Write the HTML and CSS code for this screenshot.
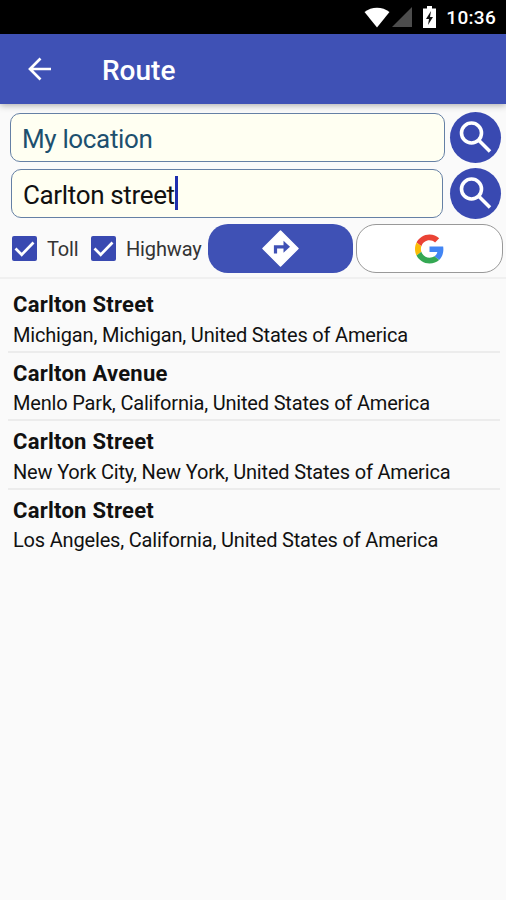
FILE: index.html
```html
<!DOCTYPE html>
<html lang="en">
<head>
  <meta charset="UTF-8" />
  <meta name="viewport" content="width=device-width, initial-scale=1" />
  <title>Route</title>
  <link rel="stylesheet" href="styles.css">
</head>
<body>
  <div class="status-bar">
    <svg class="wifi" viewBox="0 0 26 21"><path d="M0.5 5C7.5-.8 18.500-.8 25.500 5L13 20.500z" fill="#fff"/></svg>
    <svg class="signal" viewBox="0 0 20 20"><path d="M0 20L20 0V20z" fill="#4d4d4d"/></svg>
    <svg class="battery" viewBox="0 0 13 22">
      <path d="M4 0h5v2.500h4V22H0V2.500h4z" fill="#fff"/>
      <path d="M8 5L3 13h3l-1 6 5-8H7z" fill="#111"/>
    </svg>
    <span class="clock">10:36</span>
  </div>

  <header class="app-bar">
    <svg class="back" viewBox="0 0 24 24"><path d="M12.500 1.500L2 12l10.500 10.500M2 12h21" fill="none" stroke="#fff" stroke-width="2.700"/></svg>
    <h1>Route</h1>
  </header>

  <main>
    <div class="search-row">
      <div class="field from">My location</div>
      <button type="button" class="search-btn" aria-label="Search start">
        <svg viewBox="0 0 51 51"><circle cx="21.500" cy="21" r="10" /><path d="M28.500 28L40 39.500"/></svg>
      </button>
    </div>
    <div class="search-row">
      <div class="field to">Carlton street<span class="caret"></span></div>
      <button type="button" class="search-btn" aria-label="Search destination">
        <svg viewBox="0 0 51 51"><circle cx="21.500" cy="21" r="10" /><path d="M28.500 28L40 39.500"/></svg>
      </button>
    </div>

    <div class="options">
      <div class="option toll">
        <svg class="check" viewBox="0 0 25 25"><rect width="25" height="25" rx="2"/><path d="M3.500 12.500l6.200 6.200L21.500 6.500"/></svg>
        <span>Toll</span>
      </div>
      <div class="option highway">
        <svg class="check" viewBox="0 0 25 25"><rect width="25" height="25" rx="2"/><path d="M3.500 12.500l6.200 6.200L21.500 6.500"/></svg>
        <span>Highway</span>
      </div>
      <button type="button" class="go-btn" aria-label="Directions">
        <svg viewBox="0 0 37 37">
          <path d="M18.500 1L36 18.500 18.500 36 1 18.500z" fill="#fff" stroke="#fff" stroke-width="1.500" stroke-linejoin="round"/>
          <path d="M13.500 23.500v-6.700H24" fill="none" stroke="#3f51b5" stroke-width="3.200"/>
          <path d="M21.500 10.800l6.500 6-6.500 6z" fill="#3f51b5"/>
        </svg>
      </button>
      <button type="button" class="google-btn" aria-label="Google">
        <svg viewBox="0 0 48 48">
          <path fill="#EA4335" d="M24 9.500c3.540 0 6.710 1.220 9.210 3.600l6.850-6.850C35.900 2.380 30.470 0 24 0 14.620 0 6.510 5.380 2.560 13.220l7.980 6.190C12.430 13.720 17.740 9.500 24 9.500z"/>
          <path fill="#4285F4" d="M46.980 24.550c0-1.570-.15-3.090-.38-4.550H24v9.020h12.940c-.58 2.960-2.260 5.480-4.780 7.180l7.730 6c4.510-4.180 7.090-10.360 7.090-17.650z"/>
          <path fill="#FBBC05" d="M10.530 28.590c-.48-1.450-.76-2.990-.76-4.590s.27-3.140.76-4.590l-7.980-6.190C.92 16.460 0 20.120 0 24c0 3.880.92 7.540 2.560 10.780l7.970-6.190z"/>
          <path fill="#34A853" d="M24 48c6.480 0 11.930-2.130 15.890-5.810l-7.730-6c-2.150 1.450-4.920 2.300-8.160 2.300-6.260 0-11.570-4.220-13.470-9.910l-7.980 6.190C6.510 42.620 14.620 48 24 48z"/>
        </svg>
      </button>
    </div>

    <ul class="results">
      <li>
        <h2>Carlton Street</h2>
        <p>Michigan, Michigan, United States of America</p>
      </li>
      <li>
        <h2>Carlton Avenue</h2>
        <p>Menlo Park, California, United States of America</p>
      </li>
      <li>
        <h2>Carlton Street</h2>
        <p>New York City, New York, United States of America</p>
      </li>
      <li>
        <h2>Carlton Street</h2>
        <p>Los Angeles, California, United States of America</p>
      </li>
    </ul>
  </main>
</body>
</html>
```
FILE: styles.css
```css
* {
  box-sizing: border-box;
}

body {
  margin: 0;
  min-height: 900px;
  background: #fafafa;
  color: #111;
  font-family: Roboto, "Liberation Sans", sans-serif;
}

svg {
  display: block;
  flex: none;
}

button {
  padding: 0;
  border: none;
  cursor: pointer;
}

.status-bar {
  height: 34px;
  padding: 0 10px 0 0;
  display: flex;
  align-items: center;
  justify-content: flex-end;
  background: #000;
  color: #fff;
}

.wifi {
  width: 26px;
  height: 21px;
  margin-right: 2px;
}

.signal {
  width: 20px;
  height: 20px;
  margin-right: 11px;
}

.battery {
  width: 13px;
  height: 22px;
  margin-right: 10px;
}

.clock {
  font-size: 19px;
  font-weight: 500;
  line-height: 34px;
  letter-spacing: 0.3px;
  padding-top: 2px;
}

.app-bar {
  height: 70px;
  padding-left: 28px;
  display: flex;
  align-items: center;
  background: #3f51b5;
  color: #fff;
  box-shadow: 0 1px 7px rgba(0, 0, 0, 0.35);
}

.back {
  width: 24px;
  height: 24px;
}

.app-bar h1 {
  margin: 3px 0 0 50px;
  font-size: 28px;
  font-weight: 500;
  line-height: 34px;
}

main {
  padding-top: 8px;
}

.search-row {
  display: flex;
  align-items: center;
  height: 51px;
  margin-bottom: 5px;
  padding: 0 5px 0 10px;
}

.field {
  display: flex;
  align-items: center;
  width: 435px;
  height: 49px;
  padding: 2px 0 0 11px;
  border: 1.500px solid #6580a5;
  border-radius: 10px;
  background: #fffff2;
  font-size: 26px;
  line-height: 30px;
  letter-spacing: -0.350px;
  white-space: nowrap;
}

.from {
  color: #1d506f;
}

.to {
  width: 432px;
  margin-left: 1px;
}

.caret {
  width: 3px;
  height: 34px;
  margin-top: -3px;
  background: #1f2fae;
}

.search-btn {
  width: 51px;
  height: 51px;
  margin-left: auto;
  border-radius: 50%;
  background: #3949b1;
}

.search-btn svg {
  fill: none;
  stroke: #fff;
  stroke-width: 3.600;
}

.options {
  display: flex;
  align-items: center;
  height: 55px;
  padding: 0 3px 4px 12px;
  border-bottom: 2px solid #f0f0f0;
}

.option {
  display: flex;
  align-items: center;
  color: #333;
  font-size: 20px;
  letter-spacing: -0.150px;
}

.toll {
  width: 79px;
}

.highway {
  width: 117px;
}

.option span {
  margin-left: 10px;
  padding-top: 1px;
}

.check {
  width: 25px;
  height: 25px;
  fill: #3949b1;
}

.check path {
  fill: none;
  stroke: #fff;
  stroke-width: 2.700;
}

.go-btn,
.google-btn {
  display: flex;
  align-items: center;
  justify-content: center;
  height: 49px;
  border-radius: 20px;
}

.go-btn {
  width: 145px;
  background: #3f51b5;
}

.go-btn svg {
  width: 37px;
  height: 37px;
}

.google-btn {
  width: 147px;
  margin-left: 3px;
  border: 1.500px solid #999;
  background: #fff;
}

.google-btn svg {
  width: 29px;
  height: 30px;
}

.results {
  list-style: none;
  margin: 0;
  padding: 5px 6px 0 8px;
}

.results li {
  height: 68.500px;
  padding: 7px 0 0 5px;
  border-bottom: 2px solid #ececec;
}

.results li:last-child {
  border-bottom: none;
}

.results h2 {
  margin: 0;
  font-size: 22px;
  font-weight: 700;
  line-height: 28px;
  letter-spacing: 0.250px;
}

.results p {
  margin: 2.500px 0 0;
  font-size: 20px;
  line-height: 26px;
  letter-spacing: -0.180px;
  white-space: nowrap;
}
```
